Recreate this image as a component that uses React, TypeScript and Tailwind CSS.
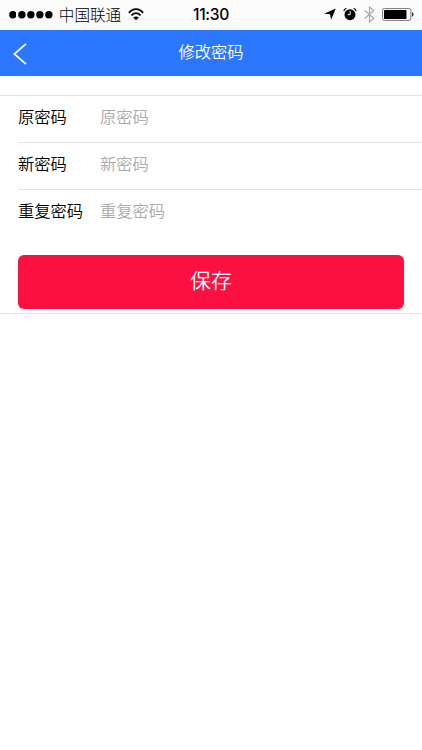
import React from 'react';

const fields = [
  { label: '原密码', type: 'text' },
  { label: '新密码', type: 'text' },
  { label: '重复密码', type: 'text' },
];

function StatusBar() {
  return (
    <div className="grid h-[30px] grid-cols-3 items-center bg-[#fbfbfb] text-black">
      <div className="flex items-center pl-[8.7px]">
        <div className="flex shrink-0 gap-[1.5px]">
          {[0, 1, 2, 3, 4].map((n) => (
            <svg key={n} width="7.7" height="8" viewBox="0 0 7.7 8">
              <circle cx="3.85" cy="3.7" r="3.7" />
            </svg>
          ))}
        </div>
        <span className="ml-[5.7px] shrink-0 whitespace-nowrap pb-[2px] text-[15.6px] leading-[28px] font-light">中国联通</span>
        <svg className="ml-[6.3px] mb-[2px] shrink-0" width="16" height="13" viewBox="0 0 16 13" fill="none" stroke="black" strokeWidth="1.9">
          <path d="M.9 4.9C5-.2 11-.2 15.1 4.9" />
          <path d="M3.4 7.4C6 4.3 10 4.3 12.6 7.4" />
          <path d="M8 12.2 5.3 9.5C6.8 8 9.2 8 10.7 9.5Z" fill="black" stroke="none" />
        </svg>
      </div>
      <div className="text-center font-['Inter','Liberation_Sans',sans-serif] text-[15.6px] leading-[30px] font-medium tracking-[-0.3px]">
        11:30
      </div>
      <div className="flex items-center justify-end pr-[8px] pb-[2px]">
        <svg width="12" height="12" viewBox="0 0 12 12">
          <path d="M11.7.4 7.1 11.7 6.1 6.2 .2 5.7Z" />
        </svg>
        <svg className="ml-[7px]" width="14" height="14" viewBox="0 0 14 14">
          <circle cx="7" cy="7.7" r="5.5" />
          <path d="M.8 4.1C1.1 2.6 2 1.7 3.5 1.2M10.5 1.2C12 1.7 12.9 2.6 13.2 4.1" fill="none" stroke="black" strokeWidth="1.1" />
          <path d="M7.2 4.2V7.7H4.6" fill="none" stroke="white" strokeWidth="1" />
        </svg>
        <svg className="ml-[7px]" width="11" height="17" viewBox="0 0 11 17" fill="none" stroke="#aaa" strokeWidth="1.2">
          <path d="m.8 4.5 9 8L5.5 16V1l4.3 3.5-9 8" />
        </svg>
        <svg className="ml-[7px]" width="32" height="13" viewBox="0 0 32 13">
          <rect x=".6" y=".6" width="28.3" height="11.8" rx="1.8" fill="white" stroke="#777" strokeWidth="1" />
          <rect x="2" y="2" width="22.5" height="9" rx=".7" />
          <path d="M30 4.3c2.1.6 2.1 3.8 0 4.4Z" fill="#333" />
        </svg>
      </div>
    </div>
  );
}

export default function App() {
  return (
    <div className="h-[750px] w-[422px] overflow-hidden bg-white font-['Noto_Sans_CJK_SC',sans-serif]">
      <StatusBar />
      <header className="grid h-[46px] grid-cols-[48px_1fr_48px] items-center bg-[#2b78ff] text-white">
        <button className="pl-[13px] pt-[2px]" aria-label="返回">
          <svg width="14" height="22" viewBox="0 0 14 22" fill="none" stroke="currentColor" strokeWidth="1.7">
            <path d="M13 .8 1.3 11 13 21.2" />
          </svg>
        </button>
        <h1 className="pb-[5px] text-center text-[16.3px] leading-[24px] font-[350]">修改密码</h1>
      </header>
      <form className="mt-[19px] h-[219px] border-y border-[#e3e3e3]">
        <div className="ml-[18px]">
          {fields.map(({ label, type }, i) => (
            <label
              key={label}
              className={`flex h-[47px] items-center border-b pb-[5px] text-[16.3px] ${i < 2 ? 'border-[#e3e3e3]' : 'border-transparent'}`}
            >
              <span className="w-[82px] shrink-0 font-[350] text-black">{label}</span>
              <input
                type={type}
                placeholder={label}
                className="mb-[2px] h-[30px] min-w-0 flex-1 bg-transparent font-[350] outline-none placeholder:text-[#aaa]"
              />
            </label>
          ))}
        </div>
        <button
          type="button"
          className="mt-[18px] ml-[18px] h-[54px] w-[386px] rounded-[6px] bg-[#fc1041] pb-[5px] text-[21px] font-[350] text-white"
        >
          保存
        </button>
      </form>
    </div>
  );
}
